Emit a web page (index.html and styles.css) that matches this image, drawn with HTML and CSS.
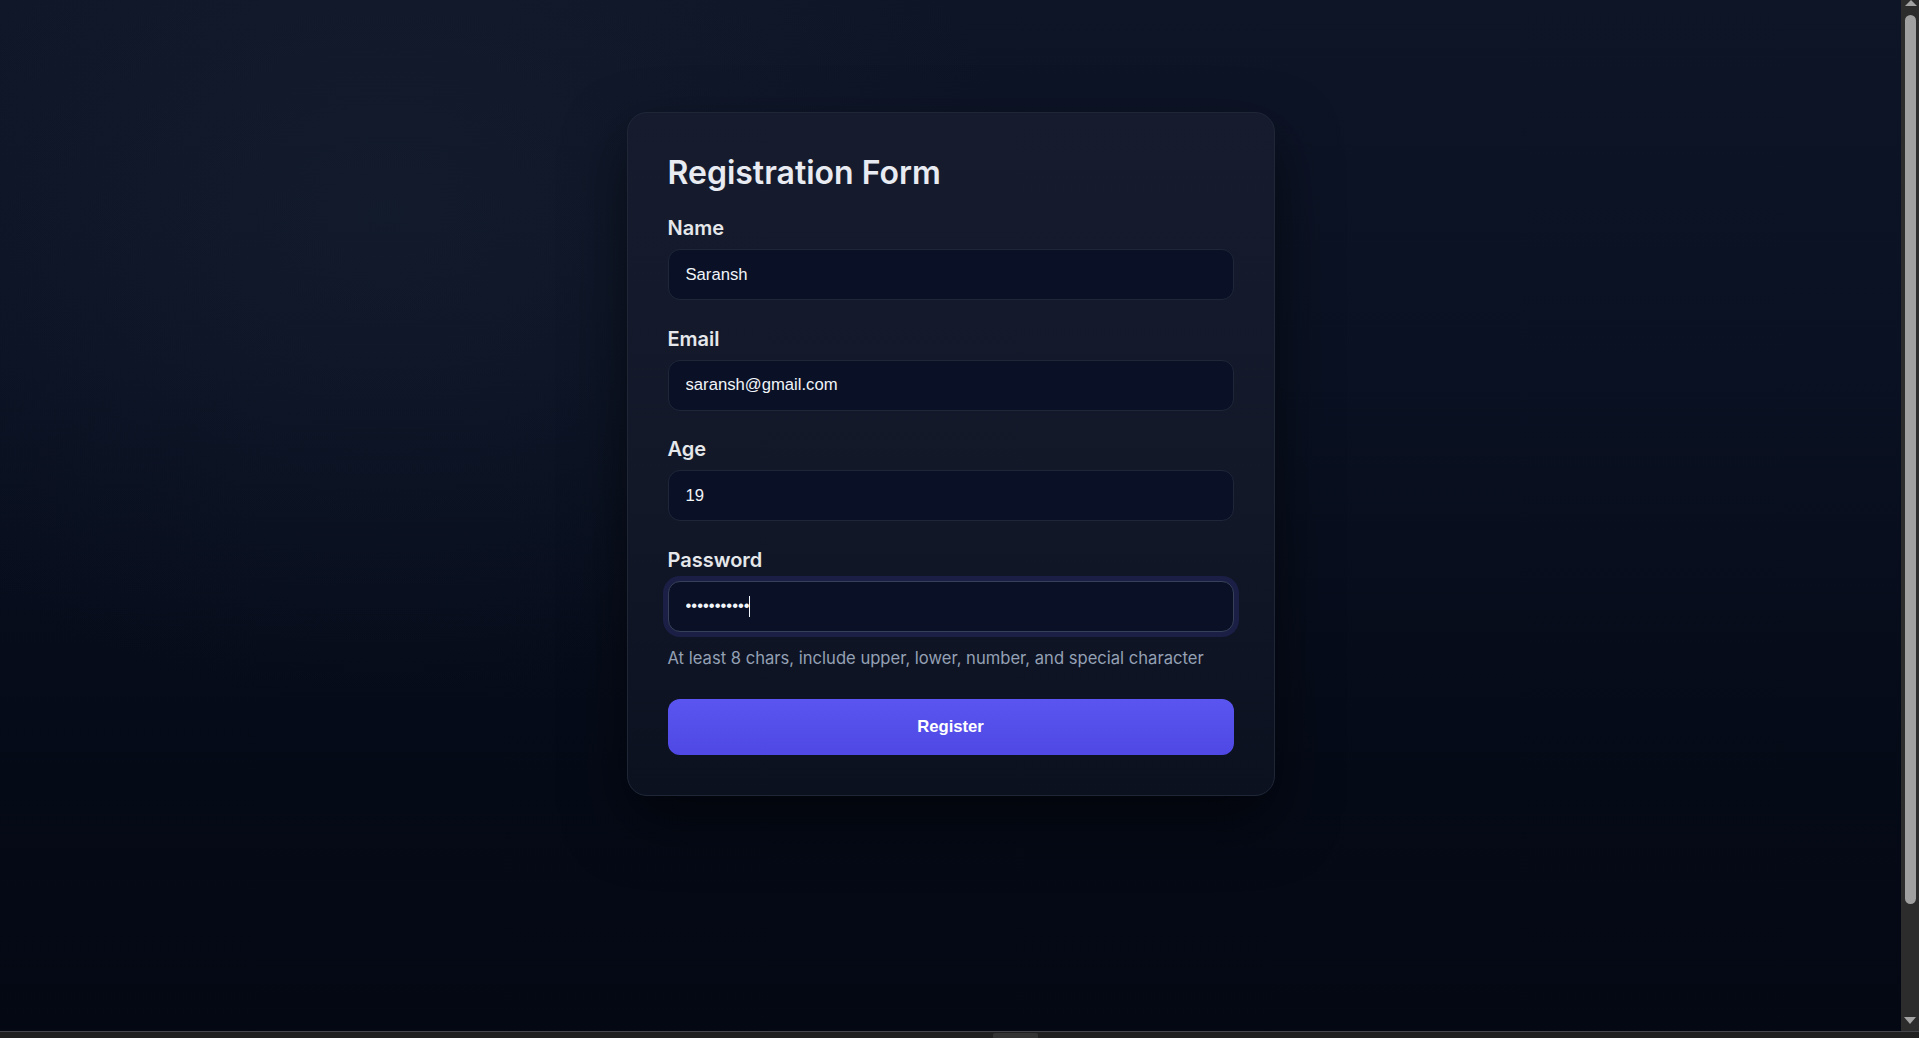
FILE: index.html
```html
<!DOCTYPE html>
<html lang="en">
<head>
<meta charset="utf-8">
<title>Registration Form</title>
<link rel="stylesheet" href="styles.css">
</head>
<body>
<main class="page">
  <form class="card" onsubmit="return false">
    <h2 class="card__title">Registration Form</h2>
    <div class="field">
      <label class="field__label" for="name">Name</label>
      <input class="field__input" id="name" type="text" value="Saransh">
    </div>
    <div class="field">
      <label class="field__label" for="email">Email</label>
      <input class="field__input" id="email" type="email" value="saransh@gmail.com">
    </div>
    <div class="field">
      <label class="field__label" for="age">Age</label>
      <input class="field__input" id="age" type="number" value="19">
    </div>
    <div class="field field--last">
      <label class="field__label" for="password">Password</label>
      <div class="field__wrap">
        <input class="field__input field__input--active" id="password" type="password" value="Saransh@123">
        <span class="field__caret"></span>
      </div>
      <p class="field__hint">At least 8 chars, include upper, lower, number, and special character</p>
    </div>
    <button class="btn" type="submit">Register</button>
  </form>
</main>
<div class="scrollbar" aria-hidden="true">
  <span class="scrollbar__up"></span>
  <span class="scrollbar__thumb"></span>
  <span class="scrollbar__down"></span>
</div>
<div class="hbar" aria-hidden="true"><span class="hbar__thumb"></span></div>
</body>
</html>
```
FILE: styles.css
```css
html {
  background: #060b18;
}

* {
  box-sizing: border-box;
}

body {
  margin: 0;
  font-family: Inter, "Noto Sans", "Liberation Sans", sans-serif;
  color: #e5e7eb;
  overflow: hidden;
  background:
    radial-gradient(ellipse 900px 700px at 20% 20%, rgba(30, 41, 59, 0.35), rgba(30, 41, 59, 0) 70%),
    linear-gradient(180deg, #0e1527 0%, #0a1122 35%, #050a17 75%, #040813 100%);
}

.page {
  min-height: 100vh;
  padding: 112px 18px 0 0;
  display: flex;
  justify-content: center;
  align-items: flex-start;
}

.card {
  width: 648px;
  padding: 40px;
  border: 1px solid #1f2737;
  border-radius: 20px;
  background: linear-gradient(180deg, #161c2e 0%, #121828 55%, #0c1120 100%);
  box-shadow: 0 25px 60px rgba(0, 0, 0, 0.55);
}

.card__title {
  margin: 0 0 24px;
  font-size: 32px;
  line-height: 39px;
  font-weight: 600;
  color: #e8ebf1;
}

.field {
  display: flex;
  flex-direction: column;
  margin-bottom: 26.67px;
}

.field--last {
  margin-bottom: 31px;
}

.field__label {
  font-size: 20px;
  line-height: 25px;
  font-weight: 600;
  color: #e5e7eb;
  margin-bottom: 8px;
}

.field__wrap {
  position: relative;
}

.field__input {
  display: block;
  height: 51px;
  width: 100%;
  padding: 0 17px;
  border: 1px solid #1e2638;
  border-radius: 12px;
  background: #0a1127;
  color: #f1f5f9;
  font-family: "Liberation Sans", Arial, sans-serif;
  font-size: 16.67px;
  outline: none;
}

.field__input::-webkit-outer-spin-button,
.field__input::-webkit-inner-spin-button {
  -webkit-appearance: none;
  margin: 0;
}

.field__input--active {
  border-color: #364159;
  box-shadow: 0 0 0 5px #1b1f45;
}

.field__caret {
  position: absolute;
  left: 81px;
  top: 15px;
  width: 1px;
  height: 21px;
  background: #f1f5f9;
}

.field__hint {
  margin: 16px 0 0;
  font-size: 16.6px;
  line-height: 20px;
  color: #94a0b4;
}

.btn {
  display: block;
  width: 100%;
  height: 56px;
  border: 0;
  border-radius: 12px;
  background: linear-gradient(180deg, #5a55f0 0%, #4f48e4 100%);
  color: #ffffff;
  font-family: "Liberation Sans", Arial, sans-serif;
  font-size: 16.67px;
  font-weight: 700;
  cursor: pointer;
}

.scrollbar {
  position: fixed;
  top: 0;
  right: 0;
  width: 18px;
  height: 1031px;
  background: #2c2c2c;
}

.scrollbar__up {
  position: absolute;
  top: 0;
  left: 4px;
  width: 0;
  height: 0;
  border-left: 6px solid transparent;
  border-right: 6px solid transparent;
  border-bottom: 6px solid #a3a3a3;
}

.scrollbar__thumb {
  position: absolute;
  top: 15px;
  left: 4px;
  width: 11px;
  height: 889px;
  border-radius: 6px;
  background: #a0a0a0;
}

.scrollbar__down {
  position: absolute;
  top: 1017px;
  left: 3px;
  width: 0;
  height: 0;
  border-left: 6px solid transparent;
  border-right: 6px solid transparent;
  border-top: 7px solid #a3a3a3;
}

.hbar {
  position: fixed;
  left: 0;
  bottom: 0;
  width: 100%;
  height: 7px;
  background: #202020;
  border-top: 1px solid #46464d;
}

.hbar__thumb {
  position: absolute;
  left: 993px;
  top: 1px;
  width: 45px;
  height: 6px;
  background: #333333;
  border-radius: 2px 2px 0 0;
}
```
